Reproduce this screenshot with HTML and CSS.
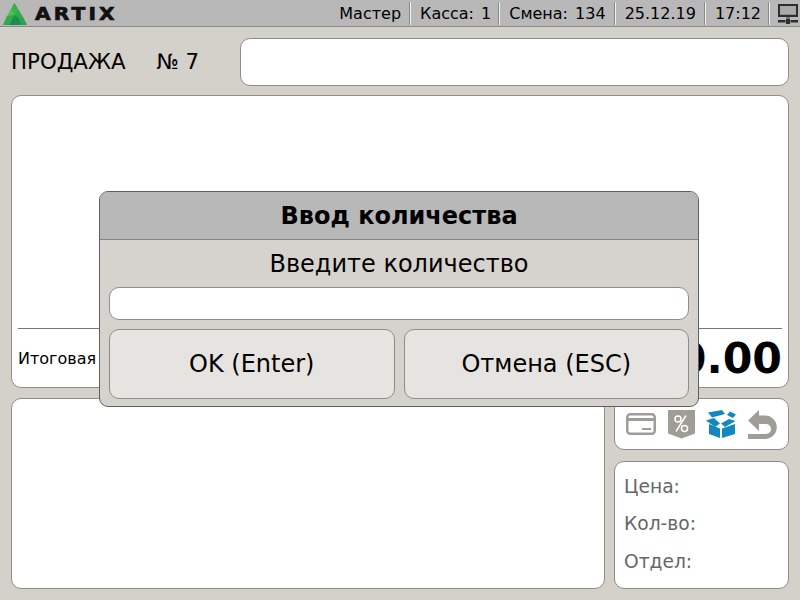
FILE: index.html
```html
<!DOCTYPE html>
<html lang="ru">
<head>
<meta charset="utf-8">
<title>ARTIX</title>
<link rel="stylesheet" href="styles.css">
</head>
<body>
<div class="screen">
  <header class="topbar">
    <div class="logo">
      <svg class="logo-mark" width="24" height="23" viewBox="0 0 24 23">
        <polygon points="11.500,1 24,23 0,23" fill="#3cb84a"/>
        <polygon points="11.500,1 15,7 8,7" fill="#35b04a"/>
        <polygon points="8,7 11.500,13 4,14" fill="#4ac652"/>
        <polygon points="15,7 20,15 11.500,13" fill="#33ad4a"/>
        <polygon points="4,14 11.500,13 7,23 0,23" fill="#33a94b"/>
        <polygon points="11.500,13 20,15 24,23 16,23" fill="#2fa34e"/>
        <polygon points="11.500,13 16,17 18,23 6,23" fill="#1f8a58"/>
      </svg>
      <span class="logo-text">ARTIX</span>
    </div>
    <div class="status">
      <span class="cell">Мастер</span>
      <span class="cell cell-kassa">Касса: 1</span>
      <span class="cell">Смена: 134</span>
      <span class="cell">25.12.19</span>
      <span class="cell cell-time">17:12</span>
      <span class="cell cell-icon">
        <svg width="20" height="21" viewBox="0 0 20 21">
          <path d="M0 1h20v13H0z M2 3v8.500h16V3z" fill="#2e2e2e" fill-rule="evenodd"/>
          <path d="M2 3h16v8.500H2z" fill="#a9a9a9"/>
          <path d="M8 14h4v2.500H8z" fill="#777"/>
          <path d="M0 17h7.500v2.500H0zM12.500 17H20v2.500h-7.500zM8 16h4v5H8z" fill="#2e2e2e"/>
        </svg>
      </span>
    </div>
  </header>

  <section class="title-row">
    <div class="title"><span class="title-sale">ПРОДАЖА</span><span>№ 7</span></div>
    <div class="panel title-field"></div>
  </section>

  <section class="panel receipt">
    <div class="receipt-foot">
      <span class="total-label">Итоговая</span>
      <span class="total-value">0.00</span>
    </div>
  </section>

  <section class="lower">
    <div class="panel list"></div>
    <div class="side">
      <div class="panel icons">
        <svg width="30" height="22" viewBox="0 0 30 22">
          <rect x="1.250" y="1.250" width="27.500" height="19.500" rx="3" fill="none" stroke="#a09d96" stroke-width="2.500"/>
          <rect x="1" y="5" width="28" height="3" fill="#a09d96"/>
          <rect x="16" y="15" width="9" height="2" fill="#a09d96"/>
        </svg>
        <svg width="28" height="29" viewBox="0 0 28 29">
          <path d="M1 0h27v23.500l-13.500 5-13.500-5z" fill="#a09d96"/>
          <circle cx="11" cy="9" r="3" fill="none" stroke="#fff" stroke-width="1.500"/>
          <circle cx="17.500" cy="18.500" r="3" fill="none" stroke="#fff" stroke-width="1.500"/>
          <path d="M19 5.500L9 21.500" stroke="#fff" stroke-width="1.500"/>
        </svg>
        <svg width="30" height="28" viewBox="0 0 30 28">
          <path d="M3 14l11 4.500V28L3 24zM29 14l-13 4.500V28l13-4z" fill="#1387bf"/>
          <path d="M0 10.500L8 8l6 5.500-5 3.500zM29.500 11L23 9l-8 4.500 4 3.500z" fill="#1387bf"/>
          <path d="M2 2.500L16 0l3 4-13 3.500z" fill="#1387bf"/>
          <path d="M24 1.500l6 3-3 3.500-6-3z" fill="#1387bf"/>
        </svg>
        <svg class="icon-back" width="29" height="29" viewBox="0 0 29 29">
          <path d="M11 0L0 10.500 11 21V14H18A5 5 0 0 1 18 24H0V29H17A11.750 11.750 0 0 0 17 5.500H11Z" fill="#a09d96"/>
        </svg>
      </div>
      <div class="panel info">
        <div>Цена:</div>
        <div>Кол-во:</div>
        <div>Отдел:</div>
      </div>
    </div>
  </section>

  <div class="dialog">
    <div class="dialog-head">Ввод количества</div>
    <div class="dialog-body">
      <div class="dialog-prompt">Введите количество</div>
      <div class="dialog-input"></div>
      <div class="dialog-buttons">
        <div class="btn">OK (Enter)</div>
        <div class="btn">Отмена (ESC)</div>
      </div>
    </div>
  </div>
</div>
</body>
</html>
```

FILE: styles.css
```css
* { box-sizing: border-box; }
html, body { margin: 0; padding: 0; }
body { font-family: "DejaVu Sans", sans-serif; color: #000; background: #d4d0ca; }
.screen { position: relative; width: 800px; height: 600px; overflow: hidden; background: #d4d0ca; display: flex; flex-direction: column; }

.topbar { height: 27px; flex: none; background: #b8b8b8; border-bottom: 1px solid #8a8a8a; display: flex; justify-content: space-between; align-items: center; }
.logo { display: flex; align-items: center; padding-left: 3px; }
.logo-mark { display: block; }
.logo-text { margin-left: 8px; font-weight: 700; font-size: 18px; letter-spacing: 2.8px; -webkit-text-stroke: 0.7px #111; color: #111; transform: scaleX(1.12); transform-origin: left center; }
.status { display: flex; height: 23px; align-items: stretch; margin-top: 1px; }
.cell { display: flex; align-items: center; padding: 0 9px; font-size: 16px; word-spacing: 2px; border-left: 1px solid #f0f0f0; box-shadow: -1px 0 0 #8a8a8a; }
.cell:first-child { border-left: 0; box-shadow: none; }
.cell-kassa { padding-right: 8px; }
.cell-time { padding-right: 8px; }
.cell-icon { padding: 0 2px 0 8px; }

.panel { background: #fff; border: 1px solid #8f8d88; border-radius: 10px; }

.title-row { display: flex; align-items: center; height: 48px; margin-top: 11px; padding: 0 11px; flex: none; }
.title { width: 229px; padding-bottom: 2px; font-size: 21.33px; }
.title-sale { margin-right: 31px; }
.title-field { flex: 1; height: 48px; }

.receipt { flex: none; height: 293px; margin: 9px 11px 0; padding: 0 6px; display: flex; flex-direction: column; justify-content: flex-end; }
.receipt-foot { height: 59px; border-top: 1px solid #777; display: flex; justify-content: space-between; align-items: center; }
.total-label { font-size: 16px; }
.total-value { font-weight: 700; font-size: 42.67px; line-height: 1; }

.lower { flex: none; display: flex; gap: 9px; margin: 10px 11px 0; height: 191px; }
.list { flex: 1; }
.side { width: 175px; display: flex; flex-direction: column; gap: 11px; }
.icons { height: 52px; display: flex; align-items: center; gap: 11px; padding: 0 0 0 11px; }
.icon-back { margin-left: 1px; }
.info { flex: 1; padding: 14px 9px 0; font-size: 18.67px; color: #666; display: flex; flex-direction: column; gap: 16px; line-height: 21.33px; }

.dialog { position: absolute; left: 99px; top: 191px; width: 600px; height: 216px; background: #d6d3cf; border: 1px solid #5f5f5f; border-radius: 9px; overflow: hidden; display: flex; flex-direction: column; }
.dialog-head { height: 48px; flex: none; background: #b8b8b8; border-bottom: 1px solid #858585; display: flex; align-items: center; justify-content: center; font-size: 24px; font-weight: 700; }
.dialog-body { flex: 1; display: flex; flex-direction: column; padding: 0 9px; }
.dialog-prompt { height: 47px; display: flex; align-items: center; justify-content: center; font-size: 24px; }
.dialog-input { height: 33px; background: #fff; border: 1px solid #8f8d88; border-radius: 10px; }
.dialog-buttons { display: flex; gap: 9px; margin-top: 9px; }
.btn { flex: 1; height: 70px; display: flex; align-items: center; justify-content: center; background: #e6e4e0; border: 1px solid #8f8d88; border-radius: 10px; font-size: 24px; }
```
